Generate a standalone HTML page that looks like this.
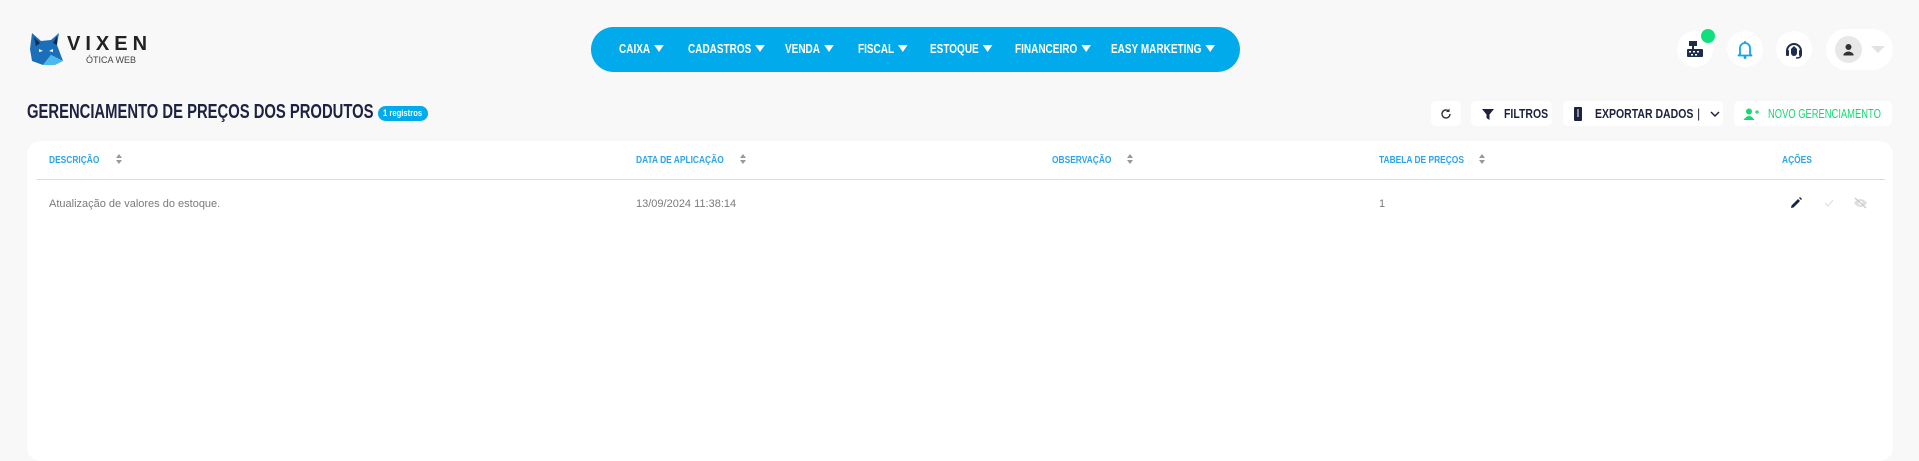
<!DOCTYPE html>
<html><head><meta charset="utf-8"><style>
*{margin:0;padding:0;box-sizing:border-box}
body{width:1919px;height:445px;background:#f8f8f8;font-family:"Liberation Sans",Arial,sans-serif;position:relative;overflow:hidden}
.abs{position:absolute}
svg{flex-shrink:0}
.c{display:inline-block;transform:scaleX(.84);transform-origin:left center;white-space:nowrap}
.nav{left:591px;top:27px;width:649px;height:45px;border-radius:23px;background:#00aaeb;}
.nav span{position:absolute;top:15px;color:#fff;font-size:12.5px;font-weight:bold;white-space:nowrap;transform:scaleX(.8);transform-origin:left}
.nav span:after{content:"";display:inline-block;margin-left:5px;border-left:6px solid transparent;border-right:6px solid transparent;border-top:7px solid #fff;vertical-align:1px}
.circ{width:36px;height:36px;border-radius:50%;background:#fff;top:31px}
.btn{background:#fff;border-radius:5px;height:25px;top:101px;font-size:12.5px;font-weight:bold;color:#1c2240;display:flex;align-items:center;white-space:nowrap;overflow:hidden}
.card{left:27px;top:141px;width:1866px;height:320px;background:#fff;border-radius:14px}
.th{top:155px;font-size:10px;font-weight:bold;color:#2ba4ec}
.sort{top:154px;width:7px;height:11px}
.sort:before{content:"";position:absolute;top:0;left:0;border-left:3.5px solid transparent;border-right:3.5px solid transparent;border-bottom:4px solid #999}
.sort:after{content:"";position:absolute;top:6px;left:0;border-left:3.5px solid transparent;border-right:3.5px solid transparent;border-top:4px solid #999}
.td{top:198px;font-size:11px;color:#7a7a7a}
</style></head><body>
<!-- logo -->
<svg class="abs" style="left:27px;top:31px" width="40" height="36" viewBox="0 0 36 36">
<path d="M3 2 L12 10 L22 9 L30 2 L28 14 L34 30 L22 24 L14 34 L3 30 L1 18 Z" fill="#1a6fb8"/>
<path d="M5 6 L11 12 L7 15 Z M28 5 L24 12 L28 14 Z" fill="#0d2a5a"/>
<path d="M10 18 L14 20 L10 21 Z M20 20 L24 18 L24 21 Z" fill="#fff"/>
<path d="M14 34 L22 24 L34 30 L26 34 Z" fill="#4bb8ee"/>
</svg>
<div class="abs" style="left:67px;top:33px;font-size:20px;letter-spacing:5px;color:#222;font-weight:bold">VIXEN</div>
<div class="abs" style="left:86px;top:55px;font-size:9px;color:#444">ÓTICA WEB</div>
<!-- nav -->
<div class="abs nav">
<span style="left:28px">CAIXA</span>
<span style="left:97px">CADASTROS</span>
<span style="left:194px">VENDA</span>
<span style="left:267px">FISCAL</span>
<span style="left:339px">ESTOQUE</span>
<span style="left:424px">FINANCEIRO</span>
<span style="left:520px">EASY MARKETING</span>
</div>
<!-- right icons -->
<div class="abs circ" style="left:1677px">
<svg width="36" height="36" viewBox="0 0 36 36"><rect x="12" y="10" width="8" height="5" fill="#1c2d4f"/><rect x="15" y="15" width="2" height="3" fill="#1c2d4f"/><rect x="10" y="18" width="16" height="8" rx="1" fill="#1c2d4f"/><g fill="#fff"><rect x="12" y="20" width="2" height="1.5"/><rect x="16" y="20" width="2" height="1.5"/><rect x="20" y="20" width="2" height="1.5"/><rect x="14" y="23" width="2" height="1.5"/><rect x="18" y="23" width="2" height="1.5"/></g></svg></div>
<div class="abs" style="left:1701px;top:29px;width:14px;height:14px;border-radius:50%;background:#0fe07c"></div>
<div class="abs circ" style="left:1727px">
<svg width="36" height="36" viewBox="0 0 36 36"><path d="M13 23 V17 a5 5 0 0 1 10 0 V23 L24.5 24.5 H11.5 Z" fill="none" stroke="#15a3ee" stroke-width="1.8" stroke-linejoin="round"/><circle cx="18" cy="26.5" r="1.5" fill="#15a3ee"/><rect x="17.2" y="10" width="1.6" height="2" fill="#15a3ee"/></svg></div>
<div class="abs circ" style="left:1776px">
<svg width="36" height="36" viewBox="0 0 36 36"><path d="M11 20 a7 7 0 0 1 14 0" fill="none" stroke="#1c2d4f" stroke-width="2"/><rect x="10" y="19" width="3" height="6" rx="1" fill="#1c2d4f"/><rect x="23" y="19" width="3" height="6" rx="1" fill="#1c2d4f"/><path d="M15 18 L18 15 L21 18 V22 a3 3 0 0 1 -6 0Z" fill="#1c2d4f"/><path d="M25 24 q0 3 -5 3" fill="none" stroke="#1c2d4f" stroke-width="1.5"/></svg></div>
<div class="abs" style="left:1826px;top:29px;width:67px;height:41px;border-radius:21px;background:#fff"></div>
<div class="abs" style="left:1835px;top:36px;width:27px;height:27px;border-radius:50%;background:#e8e8e8">
<svg width="27" height="27" viewBox="0 0 27 27"><circle cx="13.5" cy="11" r="3" fill="#333"/><path d="M8.5 18 q5 -5 10 0 v1.5 h-10z" fill="#333"/></svg></div>
<div class="abs" style="left:1871px;top:46px;border-left:7px solid transparent;border-right:7px solid transparent;border-top:7px solid #e2e2e2"></div>
<!-- title -->
<div class="abs" style="left:27px;top:101px;font-size:20px;font-weight:bold;color:#1c2240"><span class="c" style="transform:scaleX(.74)">GERENCIAMENTO DE PREÇOS DOS PRODUTOS</span></div>
<div class="abs" style="left:378px;top:106px;width:50px;height:15px;border-radius:8px;background:#00aaeb;color:#fff;font-size:9px;line-height:15px;font-weight:bold;padding-left:5px"><span class="c" style="transform:scaleX(.85)">1 registros</span></div>
<!-- buttons -->
<div class="abs btn" style="left:1431px;width:30px;justify-content:center">
<svg width="14" height="14" viewBox="0 0 14 14"><path d="M11 7 a4 4 0 1 1 -1.2 -2.9" fill="none" stroke="#333" stroke-width="1.4"/><path d="M10.5 1.5 V5 H7Z" fill="#333"/></svg></div>
<div class="abs btn" style="left:1471px;width:81px;padding-left:10px">
<svg width="14" height="14" viewBox="0 0 14 14"><path d="M1 2 H13 L8.5 7.5 V13 L5.5 11 V7.5Z" fill="#1c2240"/></svg><span class="c" style="margin-left:9px">FILTROS</span></div>
<div class="abs btn" style="left:1563px;width:160px;padding-left:10px">
<svg width="10" height="14" viewBox="0 0 10 14"><rect x="1" y="0" width="8" height="14" rx="1" fill="#1c2240"/><rect x="4.5" y="2" width="1" height="8" fill="#fff"/></svg><span class="c" style="margin-left:12px;width:102px">EXPORTAR DADOS</span><span style="margin-left:0;font-weight:normal">|</span>
<svg style="margin-left:10px" width="10" height="8" viewBox="0 0 10 8"><path d="M1 2 L5 6 L9 2" fill="none" stroke="#1c2240" stroke-width="1.5"/></svg></div>
<div class="abs btn" style="left:1734px;width:158px;padding-left:9px;color:#14d970;font-weight:normal">
<svg width="16" height="12" viewBox="0 0 16 12"><circle cx="6" cy="3.5" r="3" fill="#14d970"/><path d="M0.5 12 q5.5 -8 11 0z" fill="#14d970"/><path d="M12 4 h4 M14 2 v4" stroke="#14d970" stroke-width="1.2"/></svg><span class="c" style="margin-left:9px;transform:scaleX(.75)">NOVO GERENCIAMENTO</span></div>
<!-- card -->
<div class="abs card"></div>
<div class="abs th" style="left:49px"><span class="c">DESCRIÇÃO</span></div><div class="abs sort" style="left:116px"></div>
<div class="abs th" style="left:636px"><span class="c">DATA DE APLICAÇÃO</span></div><div class="abs sort" style="left:740px"></div>
<div class="abs th" style="left:1052px"><span class="c">OBSERVAÇÃO</span></div><div class="abs sort" style="left:1127px"></div>
<div class="abs th" style="left:1379px"><span class="c">TABELA DE PREÇOS</span></div><div class="abs sort" style="left:1479px"></div>
<div class="abs th" style="left:1782px"><span class="c">AÇÕES</span></div>
<div class="abs" style="left:37px;top:179px;width:1848px;height:1px;background:#ddd"></div>
<div class="abs td" style="left:49px">Atualização de valores do estoque.</div>
<div class="abs td" style="left:636px">13/09/2024 11:38:14</div>
<div class="abs td" style="left:1379px">1</div>
<svg class="abs" style="left:1790px;top:197px" width="12" height="12" viewBox="0 0 12 12"><path d="M1 11 L1.5 8.5 L8 2 L10 4 L3.5 10.5Z M9 1 L10 0 L12 2 L11 3Z" fill="#1c2240"/></svg>
<svg class="abs" style="left:1824px;top:199px" width="10" height="8" viewBox="0 0 10 8"><path d="M1 4 L4 7 L9 1" fill="none" stroke="#ddd" stroke-width="1"/></svg>
<svg class="abs" style="left:1853px;top:197px" width="15" height="12" viewBox="0 0 15 12"><path d="M1 6 q6.5 -8 13 0 q-6.5 8 -13 0z" fill="#ddd"/><circle cx="7.5" cy="6" r="2" fill="#fff"/><path d="M2 1 L13 11" stroke="#ccc" stroke-width="1.3"/></svg>
</body></html>
